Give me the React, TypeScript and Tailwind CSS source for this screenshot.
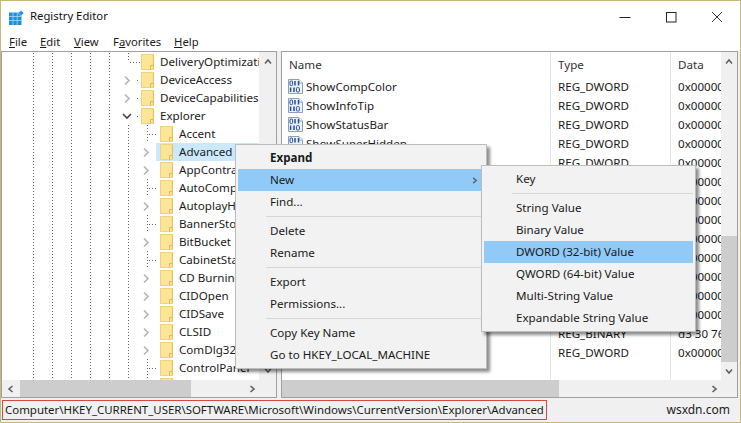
import React from "react";

const FONT = "[font-family:'Noto_Sans','Open_Sans',sans-serif]";

function Folder() {
  return (
    <svg width="13" height="16" viewBox="0 0 13 16" className="shrink-0">
      <rect x="0.5" y="0.5" width="12" height="15" fill="#fbe08a" stroke="#f0d27a" />
      <rect x="1" y="1" width="10" height="14" fill="#fde597" />
      <path d="M9.5 15.5V11.5H12.5" fill="none" stroke="#d9b95c" />
      <path d="M12.5 1V15" stroke="#e2c368" />
    </svg>
  );
}

function DwordIcon() {
  return (
    <svg width="15" height="15" viewBox="0 0 15 15" className="shrink-0">
      <path d="M0.5 0.5H11L14.5 4V14.5H0.5Z" fill="#eef1f7" stroke="#8f9fc0" />
      <path d="M11 0.5V4H14.5" fill="#fff" stroke="#8f9fc0" />
      <rect x="2" y="2" width="2.6" height="4.6" rx="1" fill="none" stroke="#1f4fa8" />
      <path d="M7 2V6.5M10.5 2V6.5M2.6 8.5V13M6 8.5V13" stroke="#1f4fa8" strokeWidth="1.5" />
      <rect x="8.4" y="8.6" width="3" height="4.4" rx="1" fill="none" stroke="#1f4fa8" />
    </svg>
  );
}

function Chevron({ d, size = 8 }: { d: "l" | "r" | "u" | "d"; size?: number }) {
  const p = { l: "M5.5 1L2 4l3.5 3", r: "M2.5 1L6 4 2.5 7", u: "M1 5.5L4 2l3 3.5", d: "M1 2.5L4 6l3-3.5" }[d];
  return (
    <svg width={size} height={size} viewBox="0 0 8 8" className="shrink-0">
      <path d={p} fill="none" stroke="#606060" strokeWidth="1.6" />
    </svg>
  );
}

type Kind = "leaf" | "chev" | "open" | "lastleaf";

function Connector({ level, kind }: { level: 5 | 6; kind: Kind }) {
  const guides = level === 5 ? [31, 50, 69, 88, 107] : [31, 50, 69, 88, 107, 126];
  const cx = level === 5 ? 126 : 145;
  const w = level === 5 ? 139 : 154;
  const dash = "1 2";
  return (
    <svg width={w} height="18" viewBox={`0 0 ${w} 18`} className="shrink-0">
      {guides.map((g) => (
        <path key={g} d={`M${g + 0.5} 0V18`} stroke="#666" strokeDasharray={dash} />
      ))}
      {kind === "leaf" && (
        <>
          <path d={`M${cx + 0.5} 0V18`} stroke="#666" strokeDasharray={dash} />
          <path d={`M${cx + 2} 9.5H${cx + 12}`} stroke="#666" strokeDasharray={dash} />
        </>
      )}
      {kind === "lastleaf" && (
        <>
          <path d={`M${cx + 0.5} 0V9`} stroke="#666" strokeDasharray={dash} />
          <path d={`M${cx + 2} 9.5H${cx + 12}`} stroke="#666" strokeDasharray={dash} />
        </>
      )}
      {kind === "chev" && (
        <>
          <path d={`M${cx - 3} 5.5L${cx + 1} 9.5L${cx - 3} 13.5`} fill="none" stroke="#b4b4b4" strokeWidth="1.6" />
          <path d={`M${cx + 9} 9.5H${cx + 12}`} stroke="#666" strokeDasharray={dash} />
        </>
      )}
      {kind === "open" && (
        <>
          <path d={`M${cx - 5} 7L${cx - 1} 11L${cx + 3} 7`} fill="none" stroke="#404040" strokeWidth="1.6" />
          <path d={`M${cx + 9} 9.5H${cx + 12}`} stroke="#666" strokeDasharray={dash} />
        </>
      )}
    </svg>
  );
}

const TREE: { name: string; level: 5 | 6; kind: Kind; sel?: boolean }[] = [
  { name: "DeliveryOptimization", level: 5, kind: "lastleaf" },
  { name: "DeviceAccess", level: 5, kind: "chev" },
  { name: "DeviceCapabilities", level: 5, kind: "chev" },
  { name: "Explorer", level: 5, kind: "open" },
  { name: "Accent", level: 6, kind: "leaf" },
  { name: "Advanced", level: 6, kind: "chev", sel: true },
  { name: "AppContract", level: 6, kind: "chev" },
  { name: "AutoComplete", level: 6, kind: "leaf" },
  { name: "AutoplayHandlers", level: 6, kind: "chev" },
  { name: "BannerStore", level: 6, kind: "leaf" },
  { name: "BitBucket", level: 6, kind: "chev" },
  { name: "CabinetState", level: 6, kind: "leaf" },
  { name: "CD Burning", level: 6, kind: "chev" },
  { name: "CIDOpen", level: 6, kind: "chev" },
  { name: "CIDSave", level: 6, kind: "chev" },
  { name: "CLSID", level: 6, kind: "chev" },
  { name: "ComDlg32", level: 6, kind: "chev" },
  { name: "ControlPanel", level: 6, kind: "leaf" },
  { name: "CPLs", level: 6, kind: "leaf" },
];

const VALUES: [string, string, string][] = [
  ["ShowCompColor", "REG_DWORD", "0x00000000 (0)"],
  ["ShowInfoTip", "REG_DWORD", "0x00000001 (1)"],
  ["ShowStatusBar", "REG_DWORD", "0x00000001 (1)"],
  ["ShowSuperHidden", "REG_DWORD", "0x00000000 (0)"],
  ["ShowTypeOverlay", "REG_DWORD", "0x00000001 (1)"],
  ["Start_SearchFiles", "REG_DWORD", "0x00000002 (2)"],
  ["StartMenuInit", "REG_DWORD", "0x00000000 (0)"],
  ["StartMigratedBrowserPin", "REG_DWORD", "0x00000001 (1)"],
  ["StoreAppsOnTaskbar", "REG_DWORD", "0x00000001 (1)"],
  ["TaskbarAnimations", "REG_DWORD", "0x00000001 (1)"],
  ["TaskbarSizeMove", "REG_DWORD", "0x00000000 (0)"],
  ["TaskbarStateLastRun", "REG_DWORD", "0x00000000 (0)"],
  ["WebView", "REG_DWORD", "0x00000001 (1)"],
  ["WinXMigrationLevel", "REG_BINARY", "d3 30 76 57"],
  ["WebViewBarricade", "REG_DWORD", "0x00000000 (0)"],
];

function Item({ children, bold, on, arrow }: { children: React.ReactNode; bold?: boolean; on?: boolean; arrow?: boolean }) {
  return (
    <div className={`h-[22px] pl-[32px] pr-[6px] flex items-center justify-between whitespace-nowrap ${bold ? "font-bold" : ""} ${on ? "bg-[#91c9f7]" : ""}`}>
      <span>{children}</span>
      {arrow && <Chevron d="r" size={7} />}
    </div>
  );
}

function Sep() {
  return (
    <div className="h-[7px] pl-[28px] flex items-center">
      <div className="h-px w-full bg-[#d7d7d7]" />
    </div>
  );
}

function PopMenu({ className, children }: { className: string; children: React.ReactNode }) {
  return (
    <div className={`absolute bg-[#f2f2f2] border border-[#bdbdbd] p-[2px] shadow-[3px_3px_3px_rgba(0,0,0,0.45)] ${className}`}>
      {children}
    </div>
  );
}

export default function App() {
  return (
    <div className={`relative w-[741px] h-[423px] overflow-hidden flex flex-col bg-[#f0f0f0] border border-[#c8b87c] text-[11.6px] leading-[18px] text-[#1a1a1a] ${FONT}`}>
      {/* title */}
      <div className="h-[32px] shrink-0 bg-white flex items-center justify-between">
        <div className="flex items-center pl-[8px] gap-[6px]">
          <svg width="15" height="15" viewBox="0 0 15 15">
            <rect x="0" y="2.5" width="12.5" height="12.5" fill="#1f8fdc" />
            <path d="M0 6.5H12.5M0 10.5H12.5M4 2.5V15M8.2 2.5V15" stroke="#a8d8f5" strokeWidth="0.8" />
            <path d="M12 0.5L15 3L12 5.8L9.2 3Z" fill="#1f8fdc" stroke="#fff" strokeWidth="0.5" />
          </svg>
          <span className="text-[11.3px] text-[#111] -translate-y-px">Registry Editor</span>
        </div>
        <div className="flex items-center pr-[17px] gap-[34px]">
          <svg width="12" height="12" viewBox="0 0 12 12"><path d="M0.5 6.5H11.5" stroke="#222" /></svg>
          <svg width="12" height="12" viewBox="0 0 12 12"><rect x="1.5" y="1.5" width="9.5" height="9.5" fill="none" stroke="#222" /></svg>
          <svg width="12" height="12" viewBox="0 0 12 12"><path d="M1 1L11 11M11 1L1 11" stroke="#333" /></svg>
        </div>
      </div>
      {/* menubar */}
      <div className="h-[18px] shrink-0 bg-white flex items-center pl-[8px] text-[11.3px]">
        <span className="w-[31px]"><u>F</u>ile</span>
        <span className="w-[34px]"><u>E</u>dit</span>
        <span className="w-[39px]"><u>V</u>iew</span>
        <span className="w-[61px]">F<u>a</u>vorites</span>
        <span><u>H</u>elp</span>
      </div>
      {/* panes */}
      <div className="h-[347px] shrink-0 flex gap-[4px]">
        {/* tree */}
        <div className="w-[276px] shrink-0 border border-[#a0a0a0] bg-white flex flex-col">
          <div className="flex-1 min-h-0 flex">
            <div className="flex-1 min-w-0 overflow-hidden pt-px">
              {TREE.map((r) => (
                <div key={r.name} className="h-[18px] flex items-center">
                  <Connector level={r.level} kind={r.kind} />
                  <div className={`flex-1 h-full flex items-center whitespace-nowrap ${r.sel ? "bg-[#cce8ff] pl-[4px]" : r.level === 6 ? "pl-[4px]" : ""}`}>
                    <Folder />
                    <span className="ml-[6px]">{r.name}</span>
                  </div>
                </div>
              ))}
            </div>
            <div className="w-[17px] shrink-0 bg-[#f0f0f0] flex flex-col items-center justify-between py-[6px]">
              <Chevron d="u" />
              <Chevron d="d" />
            </div>
          </div>
          <div className="h-[17px] shrink-0 bg-[#f0f0f0] flex items-center">
            <div className="w-[18px] flex justify-center shrink-0"><Chevron d="l" /></div>
            <div className="w-[171px] h-full bg-[#cdcdcd]" />
            <div className="flex-1 flex justify-end pr-[20px]"><Chevron d="r" /></div>
          </div>
        </div>
        {/* list */}
        <div className="w-[457px] shrink-0 border border-[#a0a0a0] bg-white flex flex-col">
          <div className="flex-1 min-h-0 flex">
            <div className="w-[439px] shrink-0 flex flex-col overflow-hidden">
              <div className="h-[25px] shrink-0 grid grid-cols-[269px_120px_50px] text-[#333]">
                <div className="pl-[7px] pt-[4px] border-r border-[#e5e5e5]">Name</div>
                <div className="pl-[7px] pt-[4px] border-r border-[#e5e5e5]">Type</div>
                <div className="pl-[7px] pt-[4px]">Data</div>
              </div>
              {VALUES.map(([n, t, d]) => (
                <div key={n} className="h-[19px] shrink-0 grid grid-cols-[269px_120px_50px] whitespace-nowrap">
                  <div className="pl-[6px] flex items-center gap-[3px] border-r border-[#e5e5e5]">
                    <DwordIcon />
                    <span>{n}</span>
                  </div>
                  <div className="pl-[7px] flex items-center border-r border-[#e5e5e5]">{t}</div>
                  <div className="pl-[7px] flex items-center overflow-hidden">{d}</div>
                </div>
              ))}
              <div className="flex-1 grid grid-cols-[269px_120px_50px]">
                <div className="border-r border-[#e5e5e5]" />
                <div className="border-r border-[#e5e5e5]" />
                <div />
              </div>
            </div>
            <div className="flex-1 bg-[#f0f0f0] flex flex-col items-center pt-[6px] pb-[4px]">
              <Chevron d="u" />
              <div className="mt-[170px] w-full h-[126px] bg-[#cdcdcd]" />
              <div className="mt-[5px]"><Chevron d="d" /></div>
            </div>
          </div>
          <div className="h-[17px] shrink-0 bg-[#f0f0f0] flex items-center">
            <div className="w-[277px] h-full bg-[#cdcdcd]" />
            <div className="flex-1 flex justify-end pr-[19px]"><Chevron d="r" /></div>
          </div>
        </div>
      </div>
      {/* status */}
      <div className="flex-1 flex items-center justify-between pl-px pr-[10px]">
        <div className="h-[20px] w-[545px] border border-[#d9473f] flex items-center pl-[2px] text-[11.45px] whitespace-nowrap">
          Computer\HKEY_CURRENT_USER\SOFTWARE\Microsoft\Windows\CurrentVersion\Explorer\Advanced
        </div>
        <span className="text-[12px] text-[#222]">wsxdn.com</span>
      </div>

      <PopMenu className="left-[234px] top-[143px] w-[252px]">
        <Item bold>Expand</Item>
        <Item on arrow>New</Item>
        <Item>Find...</Item>
        <Sep />
        <Item>Delete</Item>
        <Item>Rename</Item>
        <Sep />
        <Item>Export</Item>
        <Item>Permissions...</Item>
        <Sep />
        <Item>Copy Key Name</Item>
        <Item>Go to HKEY_LOCAL_MACHINE</Item>
      </PopMenu>
      <PopMenu className="left-[480px] top-[164px] w-[215px]">
        <Item>Key</Item>
        <Sep />
        <Item>String Value</Item>
        <Item>Binary Value</Item>
        <Item on>DWORD (32-bit) Value</Item>
        <Item>QWORD (64-bit) Value</Item>
        <Item>Multi-String Value</Item>
        <Item>Expandable String Value</Item>
      </PopMenu>
    </div>
  );
}
